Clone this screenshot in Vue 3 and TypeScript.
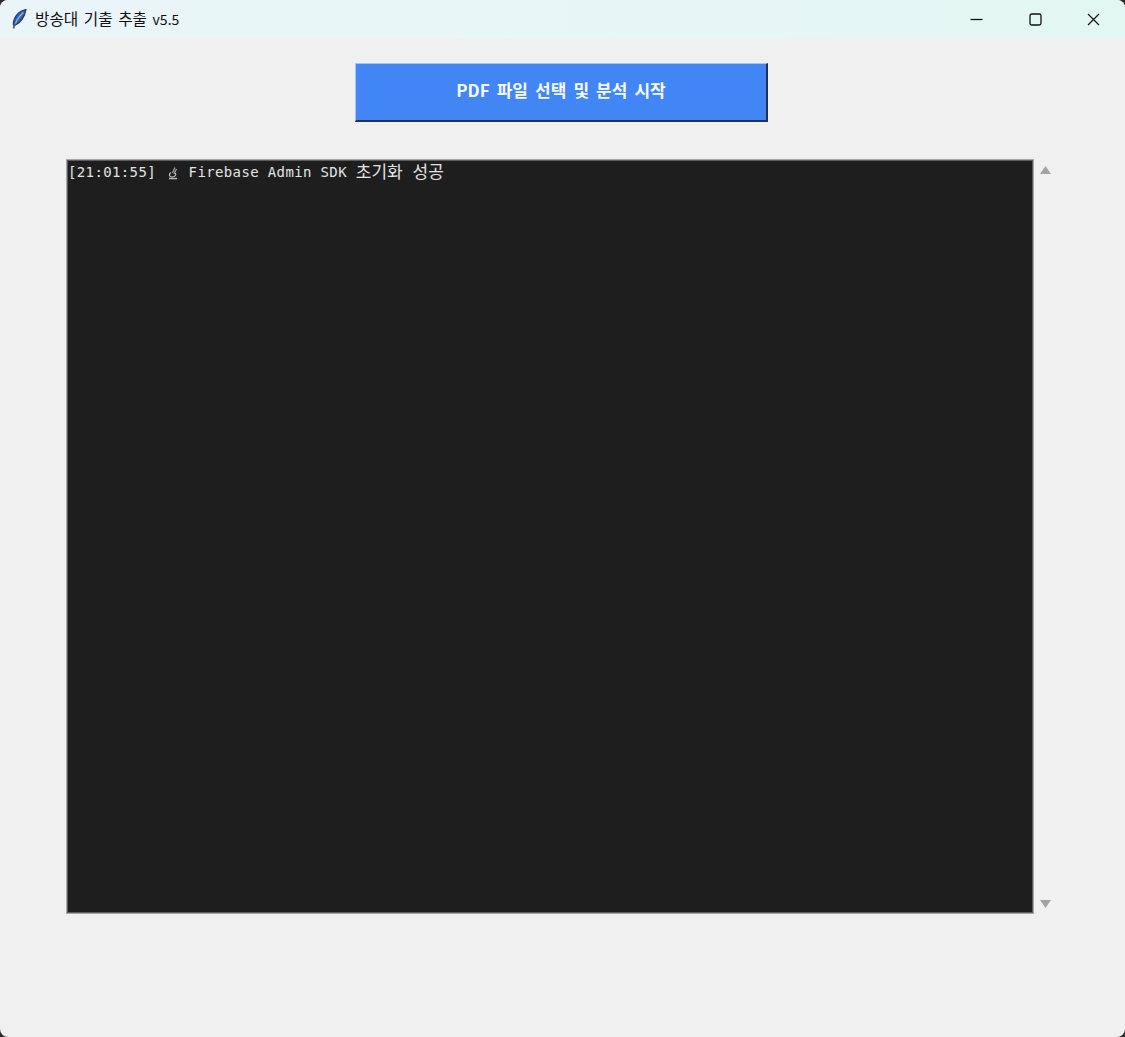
<script setup lang="ts">
const title: string = '방송대 기출 추출'
const version: string = 'v5.5'
</script>

<template>
  <div class="window">
    <header class="titlebar">
      <svg class="feather" width="15" height="20" viewBox="0 0 15 20">
        <path d="M14 .5C9.500 1.500 4.500 5 2.500 9.500c-1 2.500-1.500 5-1 7l2-.5C8.500 14 13 7.500 14 .5z" fill="#2c62b4" stroke="#2e3648" stroke-width="1.100"/>
        <path d="M11.500 3.500C8 6.500 5 10.500 3.500 14.500" stroke="#8fb8ea" stroke-width="1.200" fill="none"/>
        <path d="M2.500 15.500 1.500 19.500" stroke="#666" stroke-width="1.800" fill="none"/>
      </svg>
      <span class="title">{{ title }} <span class="version">{{ version }}</span></span>
      <div class="controls">
        <span class="ctl">
          <svg width="13" height="13" viewBox="0 0 13 13"><path d="M.5 6.500h12" stroke="#111" stroke-width="1.300"/></svg>
        </span>
        <span class="ctl">
          <svg width="13" height="13" viewBox="0 0 13 13"><rect x="1" y="1" width="11" height="11" rx="1.800" fill="none" stroke="#111" stroke-width="1.300"/></svg>
        </span>
        <span class="ctl">
          <svg width="13" height="13" viewBox="0 0 13 13"><path d="M1 1l11 11M12 1 1 12" stroke="#111" stroke-width="1.200"/></svg>
        </span>
      </div>
    </header>

    <main class="content">
      <button class="action">PDF 파일 선택 및 분석 시작</button>
      <section class="log-row">
        <div class="log">
          <span class="mono">[21:01:55] </span>
          <svg class="scope" width="12" height="14" viewBox="0 0 12 14">
            <path d="M8 1.500 5.500 7M9.500 3 7 8" stroke="#a8a8a8" stroke-width="1.200" fill="none"/>
            <path d="M4 6.500C1.500 8 2 11 5 11c3 0 4.500-2 3.500-4" stroke="#cfcfcf" stroke-width="1.100" fill="none"/>
            <path d="M2 12.500h8" stroke="#b8b8b8" stroke-width="1.400"/>
          </svg>
          <span class="mono"> Firebase Admin SDK </span><span class="kr">초기화 성공</span>
        </div>
        <div class="scroll">
          <svg width="11" height="8" viewBox="0 0 11 8"><path d="M5.500 0l5.500 8H0z" fill="#a3a3a3"/></svg>
          <svg width="11" height="8" viewBox="0 0 11 8"><path d="M0 0h11L5.500 8z" fill="#a3a3a3"/></svg>
        </div>
      </section>
    </main>
  </div>
</template>

<style scoped>
.window {
  width: 1125px;
  height: 1037px;
  background: #f0f0f0;
  border-radius: 8px;
  overflow: hidden;
  display: flex;
  flex-direction: column;
}
.titlebar {
  height: 38px;
  flex: none;
  display: flex;
  align-items: center;
  padding-left: 12px;
  background: linear-gradient(90deg, #eaf5f9, #e3f7f2);
}
.feather { flex: none; }
.title {
  margin-left: 8px;
  padding-bottom: 2px;
  font: 15.7px "Noto Sans CJK KR", "Noto Sans", sans-serif;
  word-spacing: 2px;
  color: #111;
}
.version { font-size: 14px; }
.controls {
  margin-left: auto;
  display: flex;
  padding-right: 2px;
}
.ctl {
  width: 58.5px;
  height: 38px;
  display: flex;
  align-items: center;
  justify-content: center;
}
.content {
  flex: 1;
  display: flex;
  flex-direction: column;
  align-items: center;
  padding: 25px 2px 0 0;
}
.action {
  width: 413px;
  height: 59px;
  box-sizing: border-box;
  background: #4285f4;
  color: #f6f9ff;
  border-style: solid;
  border-width: 1px 2px 2px 1px;
  border-color: #a5c4fa #23324f #23324f #a5c4fa;
  font: bold 17px "Noto Sans CJK KR", "Noto Sans", sans-serif;
  word-spacing: 3.2px;
  padding: 0 0 5px;
  flex: none;
}
.log-row {
  align-self: flex-start;
  margin: 37px 0 0 66px;
  display: flex;
}
.log {
  width: 968px;
  height: 755px;
  box-sizing: border-box;
  background: #1e1e1e;
  border: 1px solid #a6a6a6;
  box-shadow: inset 0 0 0 1px #5c5c5c;
  padding: 1px;
  color: #e4e4e4;
  line-height: 20px;
  white-space: pre;
  display: flex;
  align-items: flex-start;
}
.mono {
  font: 14px/22px "DejaVu Sans Mono", "Liberation Mono", monospace;
  letter-spacing: .37px;
}
.scope {
  flex: none;
  margin: 5px 1px 0 2px;
}
.kr {
  font: 17px/20px "Noto Sans CJK KR", sans-serif;
  word-spacing: 6px;
}
.scroll {
  width: 23px;
  height: 755px;
  display: flex;
  flex-direction: column;
  justify-content: space-between;
  align-items: center;
  padding: 7px 0 6px;
  box-sizing: border-box;
}
</style>

<style>
html, body {
  margin: 0;
  background: #2b2b2b;
}
</style>
